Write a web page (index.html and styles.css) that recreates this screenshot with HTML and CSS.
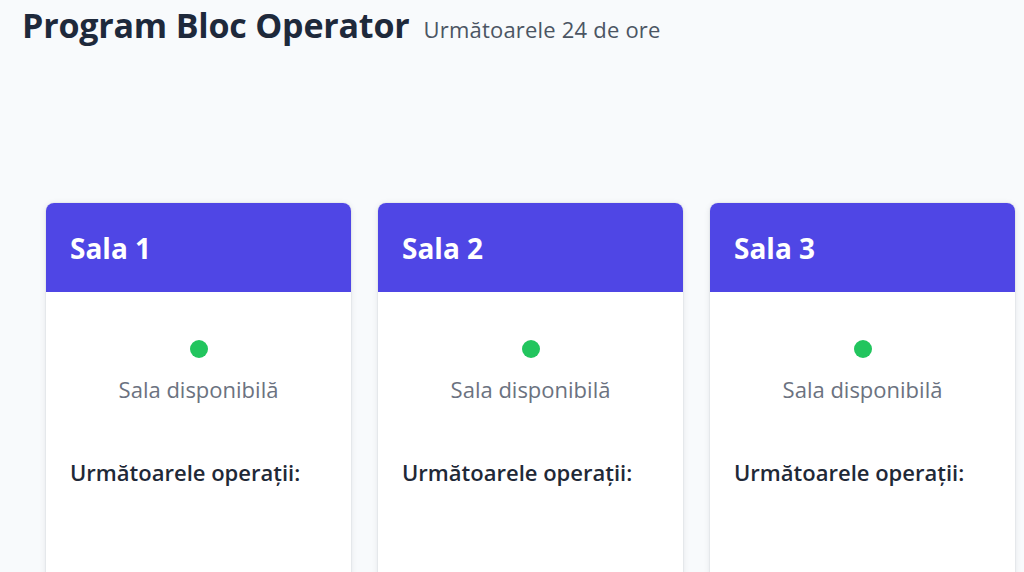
FILE: index.html
```html
<!DOCTYPE html>
<html lang="ro">
<head>
<meta charset="utf-8">
<title>Program Bloc Operator</title>
<link rel="stylesheet" href="styles.css">
</head>
<body>
<header class="page-header">
  <h1 class="title">Program Bloc Operator</h1>
  <span class="subtitle">Următoarele 24 de ore</span>
</header>
<main class="rooms">
  <section class="room">
    <div class="room-head"><h2>Sala 1</h2></div>
    <div class="room-body">
      <div class="status">
        <span class="dot"></span>
        <p class="status-text">Sala disponibilă</p>
      </div>
      <h3 class="next">Următoarele operații:</h3>
    </div>
  </section>
  <section class="room">
    <div class="room-head"><h2>Sala 2</h2></div>
    <div class="room-body">
      <div class="status">
        <span class="dot"></span>
        <p class="status-text">Sala disponibilă</p>
      </div>
      <h3 class="next">Următoarele operații:</h3>
    </div>
  </section>
  <section class="room">
    <div class="room-head"><h2>Sala 3</h2></div>
    <div class="room-body">
      <div class="status">
        <span class="dot"></span>
        <p class="status-text">Sala disponibilă</p>
      </div>
      <h3 class="next">Următoarele operații:</h3>
    </div>
  </section>
</main>
</body>
</html>
```
FILE: styles.css
```css
html, body {
  margin: 0;
  padding: 0;
  background: #f8fafc;
  font-family: "Open Sans", "Noto Sans", "Liberation Sans", sans-serif;
  color: #1f2937;
  overflow: hidden;
}

.page-header {
  display: flex;
  align-items: baseline;
  gap: 14px;
  padding: 2px 22px 0;
  height: 199px;
  box-sizing: border-box;
}

.title {
  margin: 0;
  font-size: 34px;
  font-weight: 700;
  color: #1e293b;
  letter-spacing: -0.2px;
}

.subtitle {
  font-size: 22px;
  color: #4b5563;
  letter-spacing: 0.2px;
}

.rooms {
  display: grid;
  grid-template-columns: repeat(3, 305px);
  gap: 27px;
  padding: 4px 0 0 46px;
}

.room {
  background: #ffffff;
  border-radius: 8px;
  overflow: hidden;
  box-shadow: 0 1px 6px rgba(15, 23, 42, 0.10), 0 0 0 1px rgba(15, 23, 42, 0.03);
  height: 420px;
}

.room-head {
  background: #4f46e5;
  height: 89px;
  padding: 0 24px;
  display: flex;
  align-items: center;
}

.room-head h2 {
  margin: 0;
  color: #ffffff;
  font-size: 28px;
  font-weight: 700;
}

.room-body {
  padding: 48px 24px 24px;
}

.status {
  display: flex;
  flex-direction: column;
  align-items: center;
}

.dot {
  width: 18px;
  height: 18px;
  border-radius: 50%;
  background: #22c55e;
}

.status-text {
  margin: 16px 0 0;
  font-size: 22px;
  line-height: 30px;
  color: #6b7280;
}

.next {
  margin: 53px 0 0;
  font-size: 22px;
  line-height: 30px;
  font-weight: 600;
  color: #1f2937;
}
```
